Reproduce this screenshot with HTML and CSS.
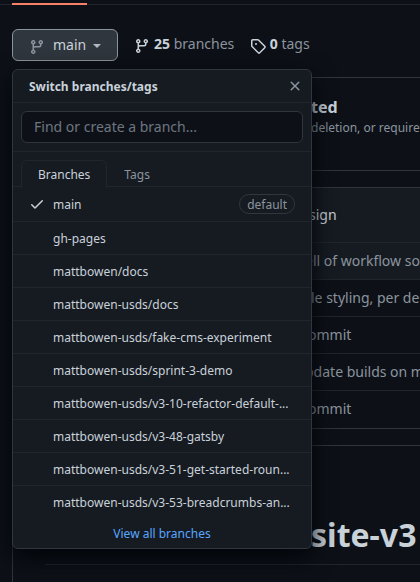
FILE: index.html
```html
<!DOCTYPE html>
<html lang="en">
<head>
<meta charset="utf-8">
<title>Branches</title>
<link rel="stylesheet" href="styles.css">
</head>
<body>
<svg class="defs" aria-hidden="true">
  <symbol id="branch" viewBox="0 0 16 16"><path fill-rule="evenodd" d="M11.75 2.5a.75.75 0 100 1.5.75.75 0 000-1.5zm-2.25.75a2.25 2.25 0 113 2.122V6A2.5 2.5 0 0110 8.5H6a1 1 0 00-1 1v1.128a2.251 2.251 0 11-1.5 0V5.372a2.25 2.25 0 111.5 0v1.836A2.492 2.492 0 016 7h4a1 1 0 001-1v-.628A2.25 2.25 0 019.5 3.25zM4.25 12a.75.75 0 100 1.5.75.75 0 000-1.5zM3.5 3.25a.75.75 0 111.5 0 .75.75 0 01-1.5 0z"/></symbol>
</svg>
<nav class="tabs-bar"><span class="active-tab"></span></nav>
<main>
  <div class="toolbar">
    <div class="picker">
      <button class="btn"><svg class="icon"><use href="#branch"/></svg><span>main</span><i class="caret"></i></button>
      <section class="menu">
        <header class="menu-header"><strong>Switch branches/tags</strong>
          <svg class="icon close" viewBox="0 0 16 16"><path fill-rule="evenodd" d="M3.72 3.72a.75.75 0 011.06 0L8 6.94l3.22-3.22a.75.75 0 111.06 1.06L9.06 8l3.22 3.22a.75.75 0 11-1.06 1.06L8 9.06l-3.22 3.22a.75.75 0 01-1.06-1.06L6.94 8 3.72 4.78a.75.75 0 010-1.06z"/></svg>
        </header>
        <div class="search"><input type="text" placeholder="Find or create a branch..."></div>
        <div class="menu-tabs"><span class="menu-tab selected">Branches</span><span class="menu-tab">Tags</span></div>
        <ul class="list">
          <li class="current"><svg class="icon check" viewBox="0 0 16 16"><path fill-rule="evenodd" d="M13.78 4.22a.75.75 0 010 1.06l-7.25 7.25a.75.75 0 01-1.06 0L2.22 9.28a.75.75 0 011.06-1.06L6 10.94l6.72-6.72a.75.75 0 011.06 0z"/></svg><span class="name">main</span><span class="label">default</span></li>
          <li><span class="name">gh-pages</span></li>
          <li><span class="name">mattbowen/docs</span></li>
          <li><span class="name">mattbowen-usds/docs</span></li>
          <li><span class="name">mattbowen-usds/fake-cms-experiment</span></li>
          <li><span class="name">mattbowen-usds/sprint-3-demo</span></li>
          <li><span class="name">mattbowen-usds/v3-10-refactor-default-...</span></li>
          <li><span class="name">mattbowen-usds/v3-48-gatsby</span></li>
          <li><span class="name">mattbowen-usds/v3-51-get-started-roun...</span></li>
          <li><span class="name">mattbowen-usds/v3-53-breadcrumbs-an...</span></li>
        </ul>
        <footer class="menu-footer"><a>View all branches</a></footer>
      </section>
    </div>
    <span class="stat branches"><svg class="icon"><use href="#branch"/></svg><b>25</b> branches</span>
    <span class="stat tags"><svg class="icon" viewBox="0 0 16 16"><path fill-rule="evenodd" d="M2.5 7.775V2.75a.25.25 0 01.25-.25h5.025a.25.25 0 01.177.073l6.25 6.25a.25.25 0 010 .354l-5.025 5.025a.25.25 0 01-.354 0l-6.25-6.25a.25.25 0 01-.073-.177zm-1.5 0V2.75C1 1.784 1.784 1 2.75 1h5.025c.464 0 .91.184 1.238.513l6.25 6.25a1.75 1.75 0 010 2.474l-5.026 5.026a1.75 1.75 0 01-2.474 0l-6.25-6.25A1.75 1.75 0 011 7.775zM6 5a1 1 0 100 2 1 1 0 000-2z"/></svg><b>0</b> tags</span>
  </div>
  <section class="box notice"><h3>ted</h3><p>deletion, or require</p></section>
  <section class="box commits">
    <div class="commit-head">sign</div>
    <div class="row hover">ell of workflow so</div>
    <div class="row styling">le styling, per de</div>
    <div class="row commit">ommit</div>
    <div class="row builds">pdate builds on m</div>
    <div class="row commit">ommit</div>
  </section>
  <section class="box readme"><h1>site-v3</h1></section>
</main>
</body>
</html>
```
FILE: styles.css
```css
* { box-sizing: border-box; }
body {
  margin: 0;
  height: 582px;
  overflow: hidden;
  background: #0d1117;
  color: #c9d1d9;
  font: 14px/21px "Noto Sans", sans-serif;
}
.defs { display: none; }
.icon { width: 16px; height: 16px; fill: currentColor; flex: none; }
.tabs-bar { height: 5px; padding: 3px 0 0 12px; border-bottom: 1px solid #21262d; }
.active-tab { display: block; width: 75px; height: 2px; background: #f78166; position: relative; }
main { padding-left: 12px; }
.toolbar { display: flex; height: 72px; padding-top: 24px; align-items: flex-start; }
.picker { position: relative; width: 106px; }
.btn {
  display: flex;
  align-items: center;
  width: 106px;
  height: 32px;
  padding: 0 16px;
  background: #30363d;
  border: 1px solid #8b949e;
  border-radius: 6px;
  color: #c9d1d9;
  font: 14px/20px "Noto Sans", sans-serif;
}
.btn .icon { color: #8b949e; margin: 4px 8px 0 0; }
.caret { margin: 1px 0 0 7px; border: 4px solid transparent; border-top-color: #b1bac4; border-bottom: 0; }
.stat { display: flex; align-items: center; height: 29px; color: #8b949e; white-space: pre; }
.stat .icon { color: #c9d1d9; margin: 5px 3.5px 0 0; }
.stat b { color: #c9d1d9; }
.branches { margin-left: 16px; }
.branches .icon { margin-right: 4px; }
.tags { margin-left: 16px; }

.menu {
  position: absolute;
  z-index: 2;
  top: 40px;
  left: 0;
  width: 300px;
  height: 480px;
  overflow: hidden;
  background: #161b22;
  border: 1px solid #30363d;
  border-radius: 6px;
  box-shadow: 0 8px 24px #010409;
  font-size: 12px;
  line-height: 18px;
}
.menu-header {
  display: flex;
  align-items: center;
  justify-content: space-between;
  height: 33px;
  padding: 1px 8px 0 16px;
  border-bottom: 1px solid #21262d;
}
.menu-header strong { padding-top: 1px; }
.close { color: #8b949e; margin-bottom: 2px; }
.search { height: 49px; padding: 8px; border-bottom: 1px solid #21262d; }
.search input {
  display: block;
  width: 282px;
  height: 32px;
  padding: 0 12px 2px;
  background: #0d1117;
  border: 1px solid #30363d;
  border-radius: 6px;
  font: 14px/20px "Noto Sans", sans-serif;
}
.search input::placeholder { color: #6e7681; opacity: 1; }
.menu-tabs { display: flex; height: 35px; padding: 8px 8px 0; border-bottom: 1px solid #21262d; }
.menu-tab { height: 27px; padding: 6px 17px 0; color: #8b949e; }
.selected {
  padding: 5px 16px 0;
  background: #161b22;
  border: 1px solid #21262d;
  border-bottom: 0;
  border-radius: 6px 6px 0 0;
  color: #c9d1d9;
  height: 28px;
}
.list { margin: 0; padding: 0; list-style: none; }
.list li { display: flex; align-items: center; height: 33px; padding: 0 16px 0 40px; border-bottom: 1px solid #21262d; }
.list .name { padding-top: 2px; }
.list .current { height: 35px; padding-left: 16px; }
.list li:last-child { height: 32px; border-bottom: 0; }
.check { margin-right: 8px; }
.label { height: 20px; margin-left: auto; padding: 1px 7px 0; border: 1px solid #30363d; border-radius: 10px; color: #8b949e; }
.menu-footer { padding-top: 7px; text-align: center; color: #58a6ff; }

.box { border: 1px solid #30363d; border-right: 0; border-radius: 6px 0 0 6px; white-space: nowrap; overflow: hidden; }
.notice { height: 94px; padding: 18px 0 0 298px; }
.notice h3 { margin: 0; font-size: 16px; line-height: 22px; }
.notice p { margin: 1px 0 0; color: #8b949e; font-size: 12px; line-height: 18px; }
.commits { height: 242px; margin-top: 16px; }
.commit-head { height: 54px; padding: 16px 0 0 296px; background: #161b22; }
.row { height: 37px; padding: 7px 0 0 292px; border-top: 1px solid #21262d; color: #8b949e; }
.styling { padding-left: 298px; }
.commit { padding-left: 295px; }
.hover { background: #161b22; }
.readme { height: 160px; margin-top: 16px; padding: 68px 0 0 32px; }
.readme h1 { margin: 0; height: 51px; padding: 1px 0 0 266px; border-bottom: 1px solid #21262d; font-size: 32px; line-height: 40px; }
```
